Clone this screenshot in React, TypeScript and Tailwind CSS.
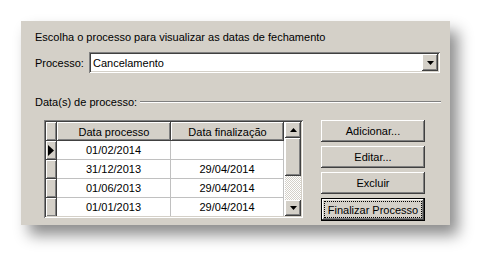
import { ReactNode } from "react";

const RAISED =
  "shadow-[inset_-1px_-1px_#404040,inset_1px_1px_#ffffff,inset_-2px_-2px_#808080,inset_2px_2px_#d4d0c8]";
const SUNKEN =
  "shadow-[inset_1px_1px_#808080,inset_-1px_-1px_#ffffff,inset_2px_2px_#404040,inset_-2px_-2px_#d4d0c8]";

const ROWS = [
  { start: "01/02/2014", end: "" },
  { start: "31/12/2013", end: "29/04/2014" },
  { start: "01/06/2013", end: "29/04/2014" },
  { start: "01/01/2013", end: "29/04/2014" },
];

function Arrow({ up }: { up?: boolean }) {
  return (
    <svg width="7" height="4" viewBox="0 0 7 4">
      <polygon points={up ? "3.5,0 7,4 0,4" : "0,0 7,0 3.5,4"} fill="#000" />
    </svg>
  );
}

function Button({ children, main }: { children: ReactNode; main?: boolean }) {
  if (main) {
    return (
      <div className="h-[23px] w-[104px] border border-black bg-[#d4d0c8]">
        <div className={`h-full w-full p-[2px] ${RAISED}`}>
          <div className="flex h-full items-center justify-center whitespace-nowrap border border-dotted border-black">
            {children}
          </div>
        </div>
      </div>
    );
  }
  return (
    <div className={`flex h-[22px] w-[104px] items-center justify-center whitespace-nowrap bg-[#d4d0c8] ${RAISED}`}>
      {children}
    </div>
  );
}

function Grid() {
  return (
    <div className={`h-[98px] w-[259px] bg-white p-[2px] ${SUNKEN}`}>
      <div className="flex h-full">
        <div className="flex-1 overflow-hidden">
          {/* header */}
          <div className="flex h-[19px]">
            <div className={`w-[11px] bg-[#d4d0c8] ${RAISED}`} />
            <div className={`flex w-[114px] items-center justify-center bg-[#d4d0c8] ${RAISED}`}>
              Data processo
            </div>
            <div className={`flex w-[113px] items-center justify-center bg-[#d4d0c8] ${RAISED}`}>
              Data finalização
            </div>
          </div>
          {ROWS.map((r, i) => (
            <div key={i} className="flex h-[19px]">
              <div className={`flex w-[11px] items-center bg-[#d4d0c8] ${RAISED}`}>
                {i === 0 && (
                  <svg width="7" height="11" viewBox="0 0 7 11" className="ml-[2px]">
                    <polygon points="0,0 6,5.5 0,11" fill="#000" />
                  </svg>
                )}
              </div>
              <div className="flex w-[114px] items-center justify-center border-r border-b border-[#c0c0c0]">
                {r.start}
              </div>
              <div className="flex w-[113px] items-center justify-center border-r border-b border-[#c0c0c0]">
                {r.end}
              </div>
            </div>
          ))}
        </div>
        {/* scrollbar */}
        <div className="flex w-[16px] flex-col bg-[repeating-conic-gradient(#d4d0c8_0%_25%,#ffffff_0%_50%)] bg-[length:2px_2px]">
          <div className={`flex h-[16px] items-center justify-center bg-[#d4d0c8] ${RAISED}`}>
            <Arrow up />
          </div>
          <div className={`h-[38px] bg-[#d4d0c8] ${RAISED}`} />
          <div className="flex-1" />
          <div className={`flex h-[16px] items-center justify-center bg-[#d4d0c8] ${RAISED}`}>
            <Arrow />
          </div>
        </div>
      </div>
    </div>
  );
}

export default function App() {
  return (
    <div
      className="min-h-[268px] w-[493px] bg-white pl-[21px] pt-[21px] text-[11px] leading-[14px] text-black"
      style={{ fontFamily: '"Liberation Sans", Arial, sans-serif' }}
    >
      <div className="flex h-[204px] w-[429px] flex-col bg-[#d4d0c8] pl-[14px] pt-[9px] shadow-[8px_10px_14px_rgba(0,0,0,0.45)]">
        <div className="h-[14px]">Escolha o processo para visualizar as datas de fechamento</div>

        <div className="mt-[8px] flex h-[21px] items-center">
          <span className="w-[54px]">Processo:</span>
          <div className={`flex h-[21px] w-[351px] items-center bg-white p-[2px] ${SUNKEN}`}>
            <span className="flex-1 pl-[2px]">Cancelamento</span>
            <div className={`flex h-[17px] w-[16px] items-center justify-center bg-[#d4d0c8] ${RAISED}`}>
              <Arrow />
            </div>
          </div>
        </div>

        <div className="mt-[22px] flex h-[14px] items-center">
          <span>Data(s) de processo:</span>
          <div className="ml-[3px] mr-[9px] flex-1 border-t border-b border-t-[#808080] border-b-white" />
        </div>

        <div className="ml-[9px] mt-[11px] flex">
          <Grid />
          <div className="ml-[18px] flex flex-col gap-[4px]">
            <Button>Adicionar...</Button>
            <Button>Editar...</Button>
            <Button>Excluir</Button>
            <Button main>Finalizar Processo</Button>
          </div>
        </div>
      </div>
    </div>
  );
}
